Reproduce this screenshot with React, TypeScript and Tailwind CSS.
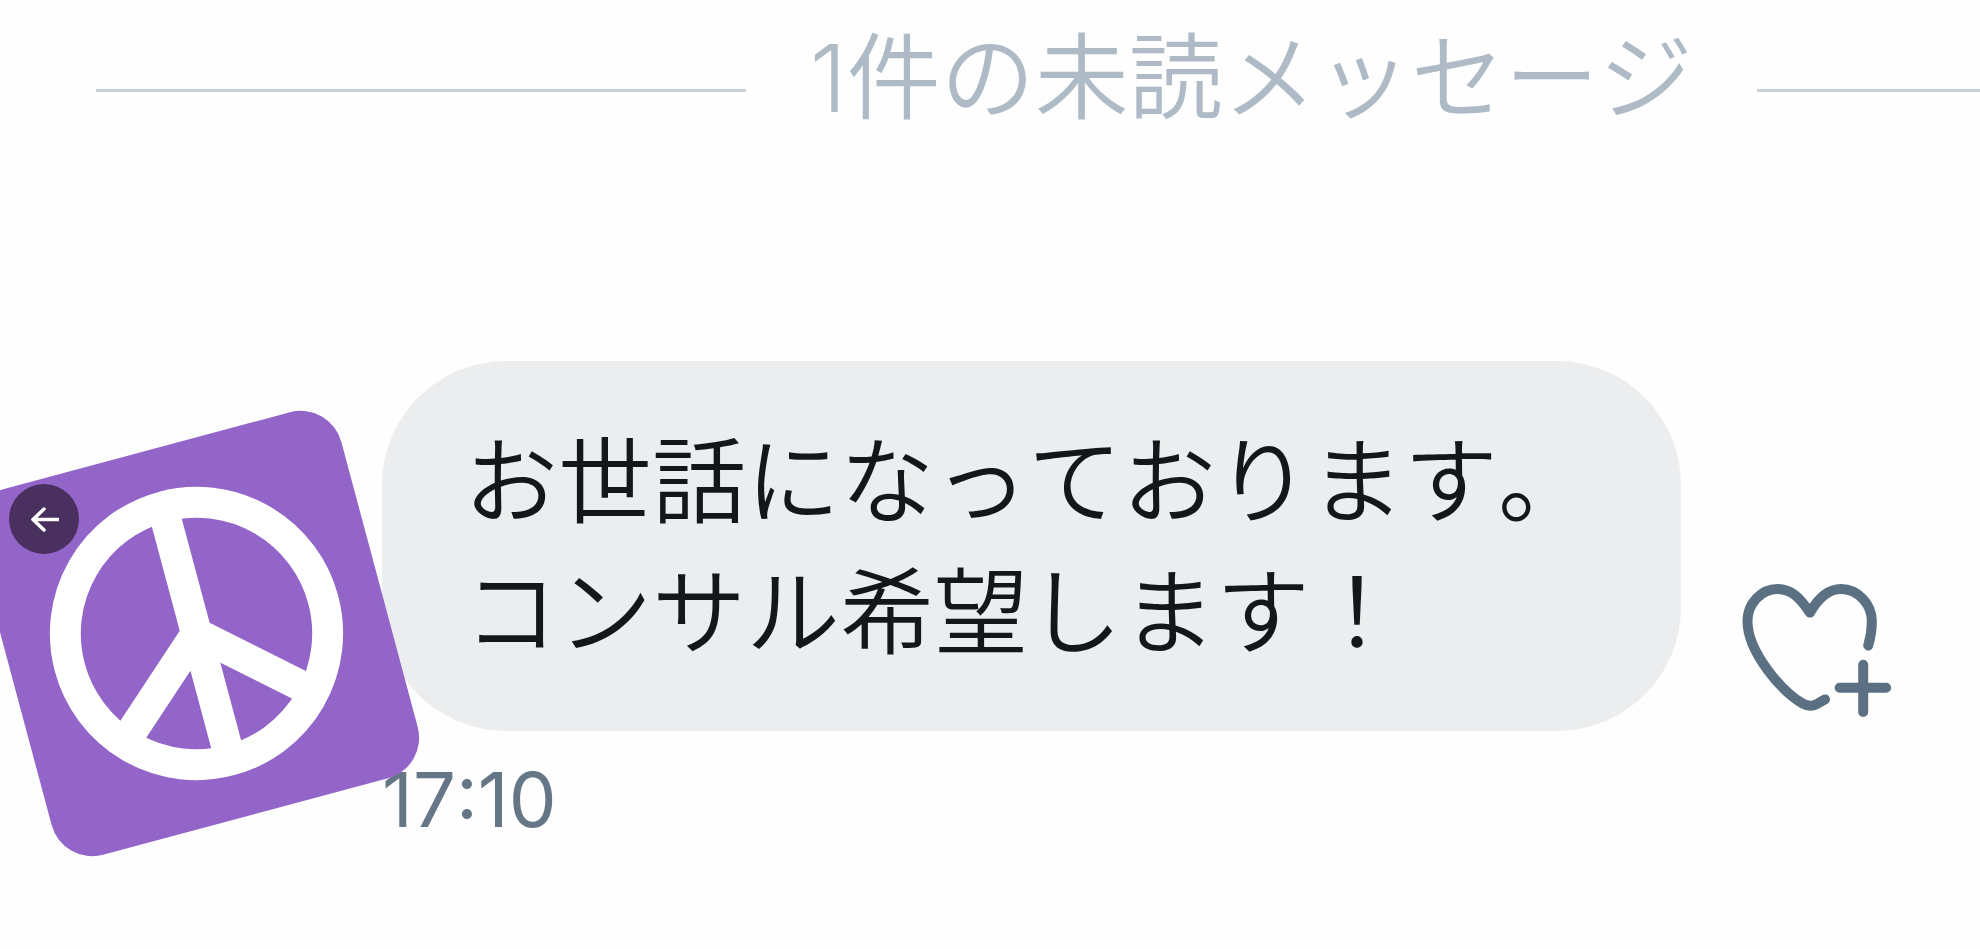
import React from 'react';

interface UnreadDividerProps {
  label: string;
}

const UnreadDivider: React.FC<UnreadDividerProps> = ({ label }) => (
  <header className="flex items-end gap-16 pt-[30px] pl-24">
    <div className="mb-[34px] h-[3px] grow-[649] basis-0 bg-[#c8d0d6]" />
    <h1 className="shrink-0 text-[94px] leading-24 font-[350] whitespace-nowrap text-[#aebac6]">{label}</h1>
    <div className="mb-[34px] h-[3px] grow-[223] basis-0 bg-[#c8d0d6]" />
  </header>
);

const PeaceAvatar: React.FC = () => (
  <div className="z-10 mt-[83px] -mr-1 ml-[7px] size-[379px] shrink-0 -rotate-15 overflow-hidden rounded-[42px] bg-[#9365c9]">
    <svg viewBox="-190 -190 380 380" className="size-full" fill="none" stroke="#fff" strokeWidth="31" role="img" aria-label="avatar">
      <circle r="131.5" />
      <path d="M0 -130V130M-98 87L0 0L98 87" />
    </svg>
  </div>
);

const HeartPlusIcon: React.FC = () => (
  <svg viewBox="123 100 453 403" className="h-[134px] w-[151px]" fill="none" stroke="#5b7083" strokeWidth="30" strokeLinecap="round" strokeLinejoin="round">
    <path d="M375 450L350 464Q330 475 307 462C250 430 142 310 142 215C142 160 185 118 232 118C275 118 300 145 330 189C355 145 385 118 423 118C475 118 516 165 516 215C516 240 512 265 505 288" />
    <path d="M490 346V488M419 415H559" />
  </svg>
);

interface MessageProps {
  lines: string[];
  time: string;
}

const Message: React.FC<MessageProps> = ({ lines, time }) => (
  <article className="flex items-start">
    <PeaceAvatar />
    <div className="grow">
      <div className="flex items-end pr-22">
        <div className="grow rounded-[124px] bg-[#ebedee] pt-14 pr-20 pb-[52px] pl-[82px] text-[94px] leading-[131px] font-[350] text-[#14171a]">
          {lines.map((line) => (
            <p key={line} className="whitespace-nowrap">{line}</p>
          ))}
        </div>
        <button type="button" aria-label="リアクションを追加" className="mb-3.5 ml-15 shrink-0">
          <HeartPlusIcon />
        </button>
      </div>
      <time className="mt-6 block text-[76px] leading-22 text-[#657786]">{time}</time>
    </div>
  </article>
);

export default function App() {
  return (
    <main className="relative min-h-screen overflow-hidden bg-[#fefefe] font-['Inter','Noto_Sans_CJK_JP',sans-serif] [font-kerning:none]">
      <UnreadDivider label="1件の未読メッセージ" />
      <section className="pt-[235px]">
        <Message lines={['お世話になっております。', 'コンサル希望します！']} time="17:10" />
      </section>

      {/* Previous image */}
      <button
        type="button"
        aria-label="前へ"
        className="absolute top-[484px] left-[9px] z-20 flex size-[70px] items-center justify-center rounded-full bg-[#49305f]"
      >
        <svg viewBox="0 0 30 26" className="h-[26px] w-[30px]" fill="none" stroke="#fff" strokeWidth="3.5" strokeLinecap="round" strokeLinejoin="round">
          <path d="M15 3L4 13.5L15 24M4 13.5H29" />
        </svg>
      </button>
    </main>
  );
}
